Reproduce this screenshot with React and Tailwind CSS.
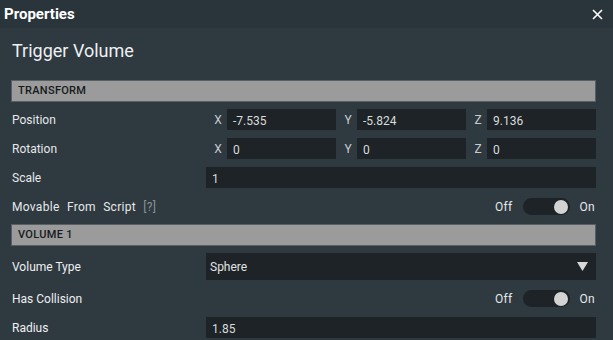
import React from "react";

const font = { fontFamily: "Roboto, 'Noto Sans', sans-serif" };

function SectionBar({ children, className = "" }) {
  return (
    <div
      className={`h-[22px] bg-[#9b9b9b] border border-[#586065] flex items-center pl-[6px] pt-[1px] text-[11px] font-medium text-[#161a1c] tracking-[0.3px] ${className}`}
    >
      {children}
    </div>
  );
}

function Label({ children, className = "" }) {
  return (
    <div className={`w-[195px] shrink-0 text-[12px] text-[#e6e8e9] ${className}`}>{children}</div>
  );
}

function Input({ value, className = "" }) {
  return (
    <div
      className={`h-[21px] bg-[#1d2326] flex items-center pl-[6px] pt-[3px] text-[12px] text-[#d9dbdc] ${className}`}
    >
      {value}
    </div>
  );
}

function Axis({ axis, value }) {
  return (
    <div className="flex items-center">
      <div className="w-[21px] shrink-0 text-center pl-[3px] text-[12px] text-[#c9cccd]">{axis}</div>
      <Input value={value} className="flex-1" />
    </div>
  );
}

function Toggle() {
  return (
    <div className="flex-1 flex items-center justify-end gap-[10px] text-[12px] text-[#e6e8e9]">
      <span className="tracking-[0.3px]">Off</span>
      <div className="w-[47px] h-[17px] rounded-full bg-[#1d2326] flex items-center justify-end pr-[2px]">
        <div className="w-[14px] h-[14px] rounded-full bg-[#d3d3d3]" />
      </div>
      <span className="pr-[1px] tracking-[0.3px]">On</span>
    </div>
  );
}

export default function App() {
  return (
    <div className="w-[613px] h-[340px] overflow-hidden bg-[#2e3940] flex flex-col" style={font}>
      <div className="h-[28px] shrink-0 bg-[#2a343b] flex items-center justify-between pl-[4px] pr-[10px]">
        <span className="text-[15px] font-bold text-white">Properties</span>
        <svg width="11" height="11" viewBox="0 0 11 11">
          <path d="M1 1 L10 10 M10 1 L1 10" stroke="#ffffff" strokeWidth="1.6" fill="none" />
        </svg>
      </div>
      <div className="flex flex-col pl-[11px] pr-[17px]">
        <div className="mt-[11px] h-[24px] leading-[24px] text-[18px] text-[#eef0f1] pl-[1px]">Trigger Volume</div>

        <SectionBar className="mt-[17px]">TRANSFORM</SectionBar>

        <div className="mt-[7px] flex items-center h-[21px]">
          <Label className="pl-[1px]">Position</Label>
          <div className="flex-1 grid grid-cols-3">
            <Axis axis="X" value="-7.535" />
            <Axis axis="Y" value="-5.824" />
            <Axis axis="Z" value="9.136" />
          </div>
        </div>

        <div className="mt-2 flex items-center h-[21px]">
          <Label className="pl-[1px]">Rotation</Label>
          <div className="flex-1 grid grid-cols-3">
            <Axis axis="X" value="0" />
            <Axis axis="Y" value="0" />
            <Axis axis="Z" value="0" />
          </div>
        </div>

        <div className="mt-2 flex items-center h-[21px]">
          <Label className="pl-[1px]">Scale</Label>
          <Input value="1" className="flex-1" />
        </div>

        <div className="mt-2 flex items-center h-[21px]">
          <Label className="pl-[1px] tracking-[0.3px] [word-spacing:4px]">
            Movable From Script <span className="text-[#8b9094]">[?]</span>
          </Label>
          <Toggle />
        </div>

        <SectionBar className="mt-[7px]">VOLUME 1</SectionBar>

        <div className="mt-[7px] flex items-center h-[27px]">
          <Label className="pl-[1px] text-[#eef0f1]">Volume Type</Label>
          <div className="flex-1 h-[27px] bg-[#1d2326] flex items-center justify-between pl-[4px] pr-[8px] text-[12px] text-[#e0e2e3]">
            <span>Sphere</span>
            <svg width="11" height="9" viewBox="0 0 11 9">
              <path d="M0 0 L11 0 L5.5 9 Z" fill="#d6d8d9" />
            </svg>
          </div>
        </div>

        <div className="mt-2 flex items-center h-[21px]">
          <Label className="pl-[1px] text-[#eef0f1]">Has Collision</Label>
          <Toggle />
        </div>

        <div className="mt-2 flex items-center h-[21px]">
          <Label className="pl-[1px] text-[#eef0f1]">Radius</Label>
          <Input value="1.85" className="flex-1" />
        </div>
      </div>
    </div>
  );
}
